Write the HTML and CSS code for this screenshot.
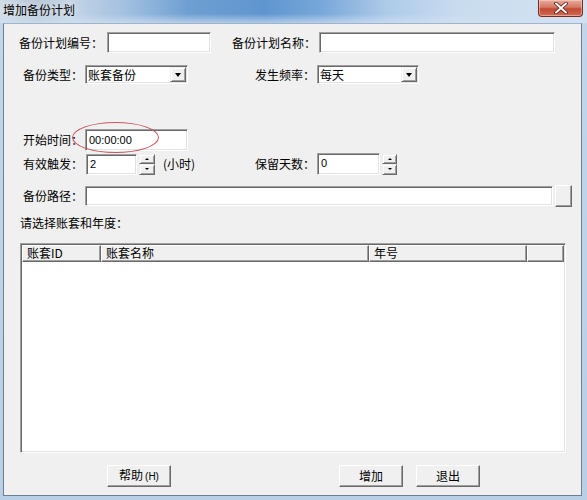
FILE: index.html
```html
<!DOCTYPE html>
<html lang="zh-CN">
<head>
<meta charset="utf-8">
<title>增加备份计划</title>
<link rel="stylesheet" href="styles.css">
</head>
<body>
<div class="window">
  <div class="titlebar">
    <span class="title">增加备份计划</span>
    <div class="close-btn">
      <svg width="16" height="12" viewBox="0 0 16 12"><path d="M3 1.5 L13 10.5 M13 1.5 L3 10.5" stroke="#5a1a14" stroke-width="3.6" stroke-linecap="round"/><path d="M3 1.5 L13 10.5 M13 1.5 L3 10.5" stroke="#ffffff" stroke-width="2" stroke-linecap="round"/></svg>
    </div>
  </div>
  <div class="client">
    <div class="row row1">
      <label class="lbl lbl-no">备份计划编号：</label>
      <div class="edit w-no"></div>
      <label class="lbl lbl-name">备份计划名称：</label>
      <div class="edit w-name"></div>
    </div>
    <div class="row row2">
      <label class="lbl lbl-a">备份类型：</label>
      <div class="combo w-type"><span class="val">账套备份</span><span class="drop"><i class="tri-down"></i></span></div>
      <label class="lbl lbl-b">发生频率：</label>
      <div class="combo w-freq"><span class="val">每天</span><span class="drop"><i class="tri-down"></i></span></div>
    </div>
    <div class="row row3">
      <label class="lbl lbl-a">开始时间：</label>
      <div class="edit w-time"><span class="num">00:00:00</span></div>
      <div class="ellipse"></div>
    </div>
    <div class="row row4">
      <label class="lbl lbl-c">有效触发：</label>
      <div class="edit w-trig"><span class="num">2</span></div>
      <div class="spin spin-a"><span class="sbtn"><i class="tri-up"></i></span><span class="sbtn"><i class="tri-down sm"></i></span></div>
      <span class="unit">(小时)</span>
      <label class="lbl lbl-b">保留天数：</label>
      <div class="edit w-keep"><span class="num">0</span></div>
      <div class="spin spin-b"><span class="sbtn"><i class="tri-up"></i></span><span class="sbtn"><i class="tri-down sm"></i></span></div>
    </div>
    <div class="row row5">
      <label class="lbl lbl-a">备份路径：</label>
      <div class="edit w-path"></div>
      <div class="browse"></div>
    </div>
    <div class="row row6">
      <span class="lbl">请选择账套和年度：</span>
    </div>
    <div class="listview">
      <div class="lv-head">
        <span class="hcell c1">账套ID</span>
        <span class="hcell c2">账套名称</span>
        <span class="hcell c3">年号</span>
        <span class="hcell c4"></span>
      </div>
    </div>
    <div class="row buttons">
      <button class="btn b-help">帮助<span class="acc">(H)</span></button>
      <button class="btn b-add">增加</button>
      <button class="btn b-exit">退出</button>
    </div>
  </div>
</div>
</body>
</html>
```

FILE: styles.css
```css
* { box-sizing: border-box; }
html, body { margin: 0; padding: 0; }
body {
  width: 587px;
  height: 500px;
  overflow: hidden;
  font-family: "Noto Sans CJK SC", "Liberation Sans", sans-serif;
  font-size: 12px;
  color: #000;
}
.window {
  width: 587px;
  height: 500px;
  background: linear-gradient(to bottom, #c3d6ea, #b9cfe6);
  padding: 0 5px 4px 3px;
  display: flex;
  flex-direction: column;
}
.titlebar {
  height: 23px;
  margin: 0 -5px 0 -3px;
  position: relative;
  background:
    linear-gradient(to bottom, rgba(255,255,255,0) 60%, rgba(210,225,242,0.7) 100%),
    linear-gradient(to right, #cfdbe8 0%, #b7c6d6 6%, #c5d5e6 12%, #9fbfe0 22%, #6f9fd2 32%, #5f95cf 45%, #79a8da 55%, #aecbe9 66%, #c9dcef 78%, #d3e2f1 100%);
}
.title {
  position: absolute;
  left: 3px;
  top: 3px;
  font-size: 12px;
  line-height: 14px;
  color: #000;
  text-shadow: 0 0 6px rgba(255,255,255,0.9);
}
.close-btn {
  position: absolute;
  left: 538px;
  top: 0;
  width: 45px;
  height: 17px;
  border: 1px solid #7a2a22;
  border-top: none;
  border-radius: 0 0 4px 4px;
  background: linear-gradient(to bottom, #e8a99a 0%, #d47966 45%, #c24a35 55%, #cf6b52 100%);
  display: flex;
  align-items: center;
  justify-content: center;
  box-shadow: inset 0 0 0 1px rgba(255,220,210,0.5);
}
.client {
  width: 579px;
  height: 473px;
  background: #f0f0f0;
  border: 1px solid #6e7f93;
  border-top-color: #9fb4cb;
  position: relative;
}
.row {
  display: flex;
  align-items: center;
}
.lbl {
  flex: none;
  white-space: nowrap;
  line-height: 14px;
}
.edit, .combo {
  flex: none;
  background: #fff;
  border-top: 1px solid #a0a0a0;
  border-left: 1px solid #a0a0a0;
  border-bottom: 1px solid #fff;
  border-right: 1px solid #fff;
  box-shadow: inset 1px 1px 0 #696969, inset -1px -1px 0 #e3e3e3;
}
.num {
  font-family: "Liberation Sans", sans-serif;
  font-size: 11px;
  line-height: 14px;
  padding-left: 3px;
}
.row1 { margin-top: 8px; height: 21px; }
.row1 .lbl-no { margin-left: 15px; width: 88px; }
.row1 .w-no { width: 104px; height: 21px; }
.row1 .lbl-name { margin-left: 21px; width: 87px; }
.row1 .w-name { width: 236px; height: 21px; }

.row2 { margin-top: 12px; height: 19px; }
.lbl-a { margin-left: 19px; width: 62px; }
.lbl-b { width: 62px; }
.row2 .lbl-b { margin-left: 67px; }
.combo {
  height: 19px;
  display: flex;
  align-items: center;
  justify-content: space-between;
  padding: 0 1px 0 2px;
}
.combo .val { line-height: 14px; }
.w-type { width: 103px; }
.w-freq { width: 102px; }
.drop {
  width: 16px;
  height: 15px;
  background: #f0f0f0;
  border-top: 1px solid #f0f0f0;
  border-left: 1px solid #f0f0f0;
  border-right: 1px solid #696969;
  border-bottom: 1px solid #696969;
  box-shadow: inset 1px 1px 0 #fff, inset -1px -1px 0 #a0a0a0;
  display: flex;
  align-items: center;
  justify-content: center;
}
.tri-down {
  width: 0; height: 0;
  border-left: 3.5px solid transparent;
  border-right: 3.5px solid transparent;
  border-top: 4px solid #000;
}
.tri-down.sm, .tri-up {
  border-left-width: 2px;
  border-right-width: 2px;
}
.tri-down.sm { border-top-width: 2px; }
.tri-up {
  width: 0; height: 0;
  border-left: 2px solid transparent;
  border-right: 2px solid transparent;
  border-bottom: 2px solid #000;
}

.row3 { margin-top: 45px; height: 22px; position: relative; }
.w-time { width: 103px; height: 22px; display: flex; align-items: center; }
.ellipse {
  position: absolute;
  left: 68px;
  top: -7px;
  width: 87px;
  height: 31px;
  border: 1px solid #c8575a;
  border-radius: 50%;
  pointer-events: none;
}

.row4 { margin-top: 2px; height: 22px; }
.lbl-c { margin-left: 19px; width: 63px; }
.w-trig { width: 51px; height: 21px; display: flex; align-items: flex-start; padding-top: 2px; }
.w-keep { width: 63px; height: 22px; display: flex; align-items: flex-start; padding-top: 2px; }
.spin {
  flex: none;
  display: flex;
  flex-direction: column;
  height: 21px;
}
.spin-a { margin-left: 2px; width: 16px; }
.spin-b { margin-left: 2px; width: 15px; }
.sbtn {
  flex: 1;
  background: #f0f0f0;
  border-top: 1px solid #f0f0f0;
  border-left: 1px solid #f0f0f0;
  border-right: 1px solid #696969;
  border-bottom: 1px solid #696969;
  box-shadow: inset 1px 1px 0 #fff, inset -1px -1px 0 #a0a0a0;
  display: flex;
  align-items: center;
  justify-content: center;
}
.unit { flex: none; margin-left: 8px; width: 92px; line-height: 14px; }

.row5 { margin-top: 10px; height: 22px; }
.w-path { width: 468px; height: 20px; }
.browse {
  flex: none;
  margin-left: 2px;
  width: 17px;
  height: 22px;
  background: #f0f0f0;
  border-top: 1px solid #fff;
  border-left: 1px solid #fff;
  border-right: 1px solid #696969;
  border-bottom: 1px solid #696969;
  box-shadow: inset -1px -1px 0 #a0a0a0;
}

.row6 { margin-top: 9px; height: 14px; }
.row6 .lbl { margin-left: 16px; }

.listview {
  margin: 13px 0 0 16px;
  width: 546px;
  height: 210px;
  background: #fff;
  border-top: 1px solid #a0a0a0;
  border-left: 1px solid #a0a0a0;
  border-bottom: 1px solid #fff;
  border-right: 1px solid #fff;
  box-shadow: inset 1px 1px 0 #696969, inset -1px -1px 0 #e3e3e3;
  padding: 1px;
}
.lv-head {
  display: flex;
  height: 17px;
}
.hcell {
  flex: none;
  height: 17px;
  background: #f0f0f0;
  border-top: 1px solid #fff;
  border-left: 1px solid #fff;
  border-right: 1px solid #696969;
  border-bottom: 1px solid #696969;
  box-shadow: inset -1px -1px 0 #a0a0a0;
  padding-left: 4px;
  line-height: 14px;
  white-space: nowrap;
}
.c1 { width: 79px; }
.c2 { width: 268px; }
.c3 { width: 158px; }
.c4 { width: 37px; }

.buttons { margin-top: 12px; height: 22px; }
.btn {
  flex: none;
  height: 22px;
  width: 64px;
  font-family: "Noto Sans CJK SC", sans-serif;
  font-size: 12px;
  line-height: 14px;
  color: #000;
  background: #f0f0f0;
  border-top: 1px solid #fff;
  border-left: 1px solid #fff;
  border-right: 1px solid #696969;
  border-bottom: 1px solid #696969;
  box-shadow: inset -1px -1px 0 #a0a0a0;
  padding: 0;
  margin: 0;
}
.acc { font-family: "Liberation Sans", sans-serif; font-size: 10px; margin-left: 2px; }
.b-help { margin-left: 103px; }
.b-add { margin-left: 168px; }
.b-exit { margin-left: 13px; }
```
